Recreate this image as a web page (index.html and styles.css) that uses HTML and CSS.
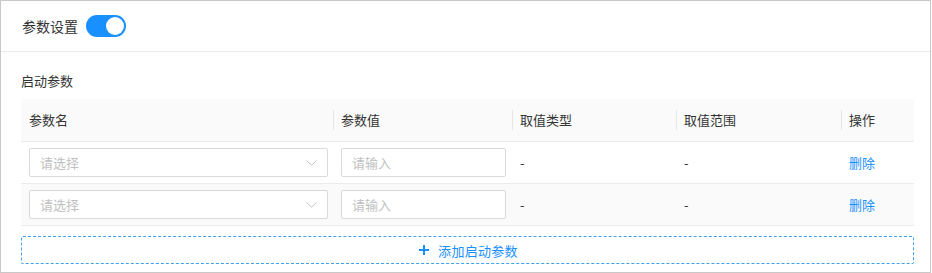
FILE: index.html
```html
<!DOCTYPE html>
<html lang="zh-CN">
<head>
<meta charset="utf-8">
<link rel="stylesheet" href="styles.css">
</head>
<body>
<div class="panel">
  <div class="panel-head">
    <span class="panel-title">参数设置</span>
    <span class="switch"><span class="knob"></span></span>
  </div>
  <div class="panel-body">
    <div class="section-label">启动参数</div>
    <div class="table">
      <div class="row head">
        <div class="cell">参数名</div>
        <div class="cell sep">参数值</div>
        <div class="cell sep">取值类型</div>
        <div class="cell sep">取值范围</div>
        <div class="cell sep">操作</div>
      </div>
      <div class="row">
        <div class="cell"><div class="select"><span class="ph">请选择</span><svg class="arrow" width="11" height="6" viewBox="0 0 11 6"><path d="M0.5 0.5 L5.5 5.2 L10.5 0.5" fill="none" stroke="#c4c4c4" stroke-width="1"/></svg></div></div>
        <div class="cell"><div class="input"><span class="ph">请输入</span></div></div>
        <div class="cell">-</div>
        <div class="cell">-</div>
        <div class="cell"><span class="link">删除</span></div>
      </div>
      <div class="row alt">
        <div class="cell"><div class="select"><span class="ph">请选择</span><svg class="arrow" width="11" height="6" viewBox="0 0 11 6"><path d="M0.5 0.5 L5.5 5.2 L10.5 0.5" fill="none" stroke="#c4c4c4" stroke-width="1"/></svg></div></div>
        <div class="cell"><div class="input"><span class="ph">请输入</span></div></div>
        <div class="cell">-</div>
        <div class="cell">-</div>
        <div class="cell"><span class="link">删除</span></div>
      </div>
    </div>
    <div class="add-btn"><svg class="plus" width="10" height="12" viewBox="0 0 10 12"><path d="M0 6 H10 M5 1 V11" stroke="#1890ff" stroke-width="2" fill="none"/></svg><span class="add-text">添加启动参数</span></div>
  </div>
</div>
</body>
</html>
```

FILE: styles.css
```css
* { box-sizing: border-box; }
html, body { margin: 0; padding: 0; background: #fff; }
body {
  font-family: "Noto Sans CJK SC", "Noto Sans", sans-serif;
  color: #333;
}
.panel {
  width: 931px;
  height: 273px;
  border: 1px solid #c8c8c8;
  background: #fff;
}
.panel-head {
  height: 51px;
  border-bottom: 1px solid #ebebeb;
  display: flex;
  align-items: center;
  padding-left: 21px;
  gap: 8px;
}
.panel-title { font-size: 14px; line-height: 20px; color: #333; }
.switch {
  width: 40px;
  height: 22px;
  border-radius: 11px;
  background: #1890ff;
  display: flex;
  align-items: center;
  justify-content: flex-end;
  padding-right: 2px;
}
.knob { width: 18px; height: 18px; border-radius: 50%; background: #fff; }
.panel-body { padding: 19px 16px 8px 20px; }
.section-label { font-size: 13px; line-height: 20px; height: 20px; margin-bottom: 8px; color: #333; }
.table { width: 893px; font-size: 13px; }
.row {
  display: grid;
  grid-template-columns: 312px 179px 164px 165px 73px;
  height: 42px;
  border-bottom: 1px solid #ececec;
  background: #fff;
}
.row.head { height: 43px; background: #fafafa; color: #333; }
.row.alt { background: #fafafa; }
.cell {
  display: flex;
  align-items: center;
  padding-left: 8px;
  position: relative;
  line-height: 20px;
}
.cell.sep::before {
  content: "";
  position: absolute;
  left: 0;
  top: 11px;
  height: 20px;
  width: 1px;
  background: #e6e6e6;
}
.select, .input {
  height: 29px;
  border: 1px solid #d9d9d9;
  border-radius: 2px;
  background: #fff;
  display: flex;
  align-items: center;
  padding-left: 10px;
}
.select { width: 299px; justify-content: space-between; padding-right: 10px; }
.input { width: 165px; }
.ph { color: #bfbfbf; font-size: 13px; }
.arrow { display: block; }
.link { color: #1890ff; }
.add-btn {
  margin-top: 10px;
  width: 893px;
  height: 28px;
  border: 1px dashed #40a0f0;
  border-radius: 2px;
  display: flex;
  align-items: center;
  justify-content: center;
  gap: 9px;
  color: #1890ff;
  font-size: 13px;
  padding-left: 2px;
}
.plus { display: block; }
.add-text { letter-spacing: 0.3px; }
```
